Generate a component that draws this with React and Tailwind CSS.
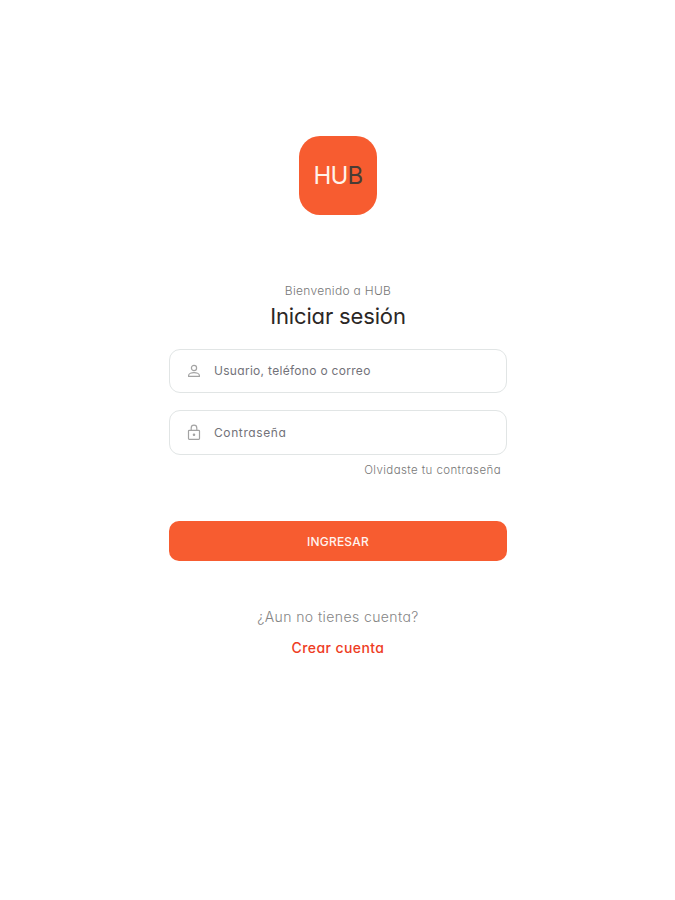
import React, { useState } from "react";

function UserIcon() {
  return (
    <svg width="14" height="14" viewBox="0 0 14 14" fill="none" stroke="#a3a3a3" strokeWidth="1.2">
      <circle cx="7" cy="4" r="2.6" />
      <path d="M1.6 12.4v-1c0-1.9 3.2-2.8 5.4-2.8s5.4.9 5.4 2.8v1z" strokeLinejoin="round" />
    </svg>
  );
}

function LockIcon() {
  return (
    <svg width="14" height="17" viewBox="0 0 14 17" fill="none" stroke="#a3a3a3" strokeWidth="1.2">
      <rect x="1.5" y="6.3" width="11" height="9" rx="0.8" />
      <path d="M4.2 6.3V4a2.8 2.8 0 0 1 5.6 0v2.3" />
      <circle cx="7" cy="10.8" r="0.7" fill="#a3a3a3" />
    </svg>
  );
}

function App() {
  const [user, setUser] = useState("");
  const [password, setPassword] = useState("");

  const handleSubmit = (e) => {
    e.preventDefault();
  };

  return (
    <div className="min-h-screen bg-white flex flex-col items-center pt-[136px] pl-px font-['Inter',sans-serif] [font-feature-settings:'cv11']">
      <div className="w-[78px] h-[79px] rounded-[21px] bg-[#f75c30] flex items-center justify-center text-2xl leading-none tracking-[-0.8px] text-[#fff3ea]">
        HU<span className="text-[#493c35]">B</span>
      </div>

      <p className="mt-[68px] text-xs leading-4 font-light tracking-[0.3px] text-[#777777]">
        Bienvenido a HUB
      </p>
      <h1 className="mt-[3px] text-[22px] leading-[28px] tracking-[-0.15px] text-[#2b2725]">
        Iniciar sesión
      </h1>

      <form onSubmit={handleSubmit} className="mt-[19px] w-[338px] flex flex-col">
        <label className="h-11 border border-[#e1e5e5] rounded-[11px] flex items-center pl-[17px]">
          <UserIcon />
          <input
            type="text"
            value={user}
            onChange={(e) => setUser(e.target.value)}
            placeholder="Usuario, teléfono o correo"
            className="ml-[13px] flex-1 min-w-0 outline-none text-xs tracking-[0.3px] placeholder:text-[#727279]"
          />
        </label>
        <label className="mt-[17px] h-[45px] border border-[#e1e5e5] rounded-[11px] flex items-center pl-[17px]">
          <LockIcon />
          <input
            type="password"
            value={password}
            onChange={(e) => setPassword(e.target.value)}
            placeholder="Contraseña"
            className="ml-[13px] flex-1 min-w-0 outline-none text-xs tracking-[0.6px] placeholder:text-[#727279]"
          />
        </label>
        <a href="#" className="mt-[7px] mr-[6px] self-end text-[11.5px] leading-4 font-light tracking-[0.4px] text-[#777777]">
          Olvidaste tu contraseña
        </a>
        <button
          type="submit"
          className="mt-[43px] h-10 rounded-[10px] bg-[#f75c30] text-[#fff3ee] text-xs font-medium tracking-[0.2px] pt-px"
        >
          INGRESAR
        </button>
      </form>

      <p className="mt-[46px] text-sm leading-5 font-light tracking-[0.42px] text-[#858585]">
        ¿Aun no tienes cuenta?
      </p>
      <a href="#" className="mt-[11px] text-sm leading-5 font-medium tracking-[0.42px] text-[#ee3c23]">
        Crear cuenta
      </a>
    </div>
  );
}

export default App;
